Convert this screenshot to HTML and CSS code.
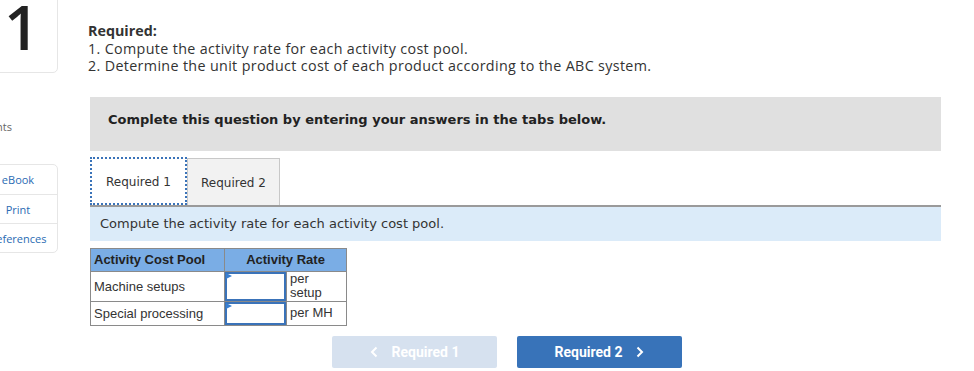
FILE: index.html
```html
<!DOCTYPE html>
<html lang="en">
    <head>
        <meta charset="UTF-8">
        <title>Question 1</title>
        <link rel="stylesheet" href="styles.css">
    </head>
    <body>
        <div class="page">
            <div class="side">
                <div class="qnum">1</div>
                <div class="points">Points</div>
                <div class="tools">
                    <a class="tool">eBook</a>
                    <a class="tool">Print</a>
                    <a class="tool">References</a>
                </div>
            </div>

            <div class="main">
                <div class="required">
                    <strong>Required:</strong><br>
                    1. Compute the activity rate for each activity cost pool.<br>
                    2. Determine the unit product cost of each product according to the ABC system.
                </div>

                <div class="banner">Complete this question by entering your answers in the tabs below.</div>

                <div class="tabs">
                    <div class="tab active">Required 1</div>
                    <div class="tab">Required 2</div>
                </div>

                <div class="prompt">Compute the activity rate for each activity cost pool.</div>

                <table class="rates">
                    <tr>
                        <th class="pool">Activity Cost Pool</th>
                        <th colspan="2">Activity Rate</th>
                    </tr>
                    <tr class="tall">
                        <td>Machine setups</td>
                        <td class="entry"><input type="text"></td>
                        <td class="unit">per<br>setup</td>
                    </tr>
                    <tr>
                        <td>Special processing</td>
                        <td class="entry"><input type="text"></td>
                        <td class="unit">per MH</td>
                    </tr>
                </table>

                <div class="nav">
                    <button class="nav-btn prev">
                        <svg class="chev" width="8" height="12" viewBox="0 0 8 12"><path d="M6.5 1.5 L2 6 L6.5 10.5" fill="none" stroke="#fff" stroke-width="2"/></svg>
                        Required 1
                    </button>
                    <button class="nav-btn next">
                        Required 2
                        <svg class="chev" width="8" height="12" viewBox="0 0 8 12"><path d="M1.5 1.5 L6 6 L1.5 10.5" fill="none" stroke="#fff" stroke-width="2"/></svg>
                    </button>
                </div>
            </div>
        </div>
    </body>
</html>
```

FILE: styles.css
```css
* {
    box-sizing: border-box;
}

body {
    margin: 0;
    background: #fff;
    color: #333;
    font-family: 'Open Sans', Lato, sans-serif;
    overflow: hidden;
}

.page {
    display: flex;
    width: 974px;
    height: 371px;
}

/* left column */
.side {
    width: 58px;
    flex-shrink: 0;
}

.qnum {
    width: 80px;
    height: 83px;
    margin: -10px 0 0 -22px;
    border: 1px solid #e6e6e6;
    border-radius: 0 0 5px 0;
    font-family: 'Open Sans', sans-serif;
    font-weight: 600;
    font-size: 62px;
    line-height: 70px;
    color: #222;
    padding-left: 25px;
}

.points {
    margin: 46px 0 0 -22px;
    width: 34px;
    text-align: right;
    font-size: 11px;
    color: #666;
}

.tools {
    width: 80px;
    margin: 30px 0 0 -22px;
    border: 1px solid #e6e6e6;
    border-radius: 0 5px 5px 0;
    display: flex;
    flex-direction: column;
}

.tool {
    display: block;
    text-align: center;
    font-size: 11px;
    color: #2a6bb3;
    height: 29px;
    line-height: 29px;
    border-top: 1px solid #e6e6e6;
}

.tool:first-child {
    border-top: none;
}

/* main column */
.main {
    margin-left: 30px;
    width: 853px;
}

.required {
    margin-top: 22px;
    font-size: 14.3px;
    line-height: 17.5px;
    letter-spacing: 0.35px;
    color: #333;
}

.required strong {
    font-weight: 700;
    letter-spacing: 0;
}

.banner {
    margin: 22px 0 0 2px;
    height: 54px;
    padding: 15px 0 0 18px;
    background: #e0e0e0;
    font-family: 'DejaVu Sans', Verdana, sans-serif;
    font-weight: bold;
    font-size: 13px;
    color: #222;
}

.tabs {
    display: flex;
    margin: 6px 0 0 2px;
    align-items: flex-end;
}

.tab {
    height: 47px;
    width: 93px;
    padding-top: 2px;
    font-family: 'DejaVu Sans', Verdana, sans-serif;
    font-size: 12px;
    color: #333;
    background: #f2f2f2;
    border: 1px solid #c8c8c8;
    border-bottom: none;
    display: flex;
    align-items: center;
    justify-content: center;
}

.tab.active {
    height: 48px;
    width: 97px;
    padding-top: 3px;
    background: #fff;
    border: 2px dotted #3a73b9;
}

.prompt {
    margin-left: 2px;
    height: 36px;
    padding: 9px 0 0 10px;
    background: #dbebf9;
    border-top: 2px solid #9a9a9a;
    font-family: 'DejaVu Sans', Verdana, sans-serif;
    font-size: 13px;
    color: #333;
}

.rates {
    margin: 7px 0 0 2px;
    border-collapse: collapse;
    font-family: 'Liberation Sans', Arial, sans-serif;
    font-size: 13px;
    color: #333;
}

.rates th,
.rates td {
    border: 1px solid #8a8a8a;
    padding: 0 3px;
}

.rates th {
    background: #7aade5;
    height: 23px;
    font-weight: bold;
    color: #222;
    text-align: center;
}

.rates th.pool {
    text-align: left;
    width: 134px;
}

.rates td {
    height: 24px;
}

.rates tr.tall td {
    height: 30px;
}

.rates td.entry {
    width: 61px;
    padding: 0;
    position: relative;
}

.rates td.entry input {
    display: block;
    width: 61px;
    height: 100%;
    border: 2px solid #3a73b9;
    margin: 0;
    padding: 0;
    background: #fff;
}

.rates td.entry::before {
    content: '';
    position: absolute;
    left: 1px;
    top: 1px;
    border-left: 6px solid #3a7fd0;
    border-top: 3px solid transparent;
    border-bottom: 3px solid transparent;
}

.rates td.unit {
    width: 60px;
    line-height: 14px;
    vertical-align: middle;
}

.nav {
    display: flex;
    gap: 20px;
    margin: 10px 0 0 244px;
}

.nav-btn {
    width: 165px;
    height: 32px;
    border: none;
    border-radius: 2px;
    display: flex;
    align-items: center;
    justify-content: center;
    gap: 14px;
    font-family: Roboto, 'Liberation Sans', sans-serif;
    font-weight: bold;
    font-size: 14px;
    color: #fff;
}

.prev {
    background: #d6e1ef;
}

.next {
    background: #3873b9;
}
```
